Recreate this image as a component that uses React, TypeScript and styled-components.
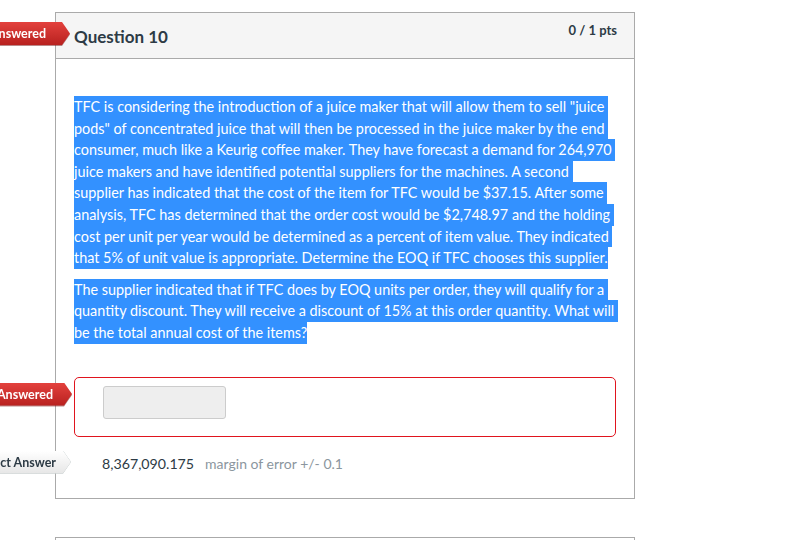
import React from 'react'
import styled, { createGlobalStyle } from 'styled-components'

const GlobalStyle = createGlobalStyle`
  body {
    margin: 0;
    background: #fff;
    font-family: Lato, 'Open Sans', sans-serif;
    color: #2d3b45;
  }
`

const Page = styled.div`
  padding: 12px 0 0 55px;
  width: 580px;
`

const QuestionBox = styled.div`
  position: relative;
  border: 1px solid #aaa;
  background: #fff;
  padding-bottom: 8px;
`

const NextBox = styled.div`
  margin-top: 38px;
  height: 20px;
  border-top: 1px solid #aaa;
  border-left: 1px solid #aaa;
  border-right: 1px solid #aaa;
`

const Header = styled.div`
  position: relative;
  display: flex;
  justify-content: space-between;
  align-items: flex-start;
  height: 45px;
  padding: 0 17px 0 18px;
  background: #f5f5f5;
  border-bottom: 1px solid #aaa;
`

const Title = styled.h2`
  margin: 13px 0 0;
  font-size: 17px;
  font-weight: 700;
  color: #2d3b45;
`

const Points = styled.span`
  margin-top: 9px;
  font-size: 13px;
  font-weight: 700;
  color: #2d3b45;
`

const Body = styled.div`
  padding: 37px 18px 0;
  font-size: 14.4px;
`

const Para = styled.div`
  margin-bottom: 10px;
`

const Line = styled.span`
  display: block;
  width: fit-content;
  line-height: 21.6px;
  background: #3391ff;
  color: #fff;
  white-space: pre;
`

const Row = styled.div<{ $h: number; $top: number }>`
  position: relative;
  height: ${(p) => p.$h}px;
  margin-top: ${(p) => p.$top}px;
  padding: 0 18px;
  display: flex;
  align-items: center;
`

const AnswerBox = styled.div`
  flex: 1;
  height: 60px;
  box-sizing: border-box;
  border: 1px solid #e0141e;
  border-radius: 5px;
  padding: 8px 28px;
`

const Input = styled.div`
  width: 121px;
  height: 31px;
  background: #eee;
  border: 1px solid #ccc;
  border-radius: 3px;
`

const CorrectValue = styled.span`
  margin-left: 28px;
  font-size: 14.2px;
  color: #2d3b45;
`

const Margin = styled.span`
  margin-left: 11px;
  font-size: 14px;
  color: #8b969e;
`

const BadgeWrap = styled.div<{ $top: number; $tip: number; $grey?: boolean }>`
  position: absolute;
  top: ${(p) => p.$top}px;
  right: calc(100% - ${(p) => p.$tip}px);
  filter: ${(p) =>
    p.$grey
      ? 'drop-shadow(0 0 0.6px #9aa)'
      : 'drop-shadow(0 1px 0.5px rgba(120,20,20,0.5))'};
`

const Badge = styled.div<{ $grey?: boolean; $pad: number }>`
  width: 130px;
  height: 23px;
  box-sizing: border-box;
  padding-right: ${(p) => p.$pad}px;
  text-align: right;
  font-size: 12.5px;
  font-weight: 700;
  line-height: 23px;
  color: ${(p) => (p.$grey ? '#2d3b45' : '#fff')};
  background: ${(p) =>
    p.$grey
      ? 'linear-gradient(#ffffff, #e6e6e6)'
      : 'linear-gradient(#e3413d, #b8211f)'};
  clip-path: polygon(0 0, 122px 0, 130px 50%, 122px 100%, 0 100%);
`

const para1 = [
  'TFC is considering the introduction of a juice maker that will allow them to sell "juice ',
  'pods" of concentrated juice that will then be processed in the juice maker by the end ',
  'consumer, much like a Keurig coffee maker. They have forecast a demand for 264,970 ',
  'juice makers and have identified potential suppliers for the machines. A second ',
  'supplier has indicated that the cost of the item for TFC would be $37.15. After some ',
  'analysis, TFC has determined that the order cost would be $2,748.97 and the holding ',
  'cost per unit per year would be determined as a percent of item value. They indicated ',
  'that 5% of unit value is appropriate. Determine the EOQ if TFC chooses this supplier.'
]

const para2 = [
  'The supplier indicated that if TFC does by EOQ units per order, they will qualify for a ',
  'quantity discount. They will receive a discount of 15% at this order quantity. What will ',
  'be the total annual cost of the items?'
]

export default function App() {
  return (
    <>
      <GlobalStyle />
      <Page>
        <QuestionBox>
          <Header>
            <BadgeWrap $top={9} $tip={14}>
              <Badge $pad={24}>Answered</Badge>
            </BadgeWrap>
            <Title>Question 10</Title>
            <Points>0 / 1 pts</Points>
          </Header>
          <Body>
            <Para>
              {para1.map((l) => (
                <Line key={l}>{l}</Line>
              ))}
            </Para>
            <Para>
              {para2.map((l) => (
                <Line key={l}>{l}</Line>
              ))}
            </Para>
          </Body>
          <Row $h={60} $top={33}>
            <BadgeWrap $top={6} $tip={16}>
              <Badge $pad={19}>Answered</Badge>
            </BadgeWrap>
            <AnswerBox>
              <Input />
            </AnswerBox>
          </Row>
          <Row $h={53} $top={0}>
            <BadgeWrap $top={14} $tip={15} $grey>
              <Badge $grey $pad={15}>
                Correct Answer
              </Badge>
            </BadgeWrap>
            <CorrectValue>8,367,090.175</CorrectValue>
            <Margin>margin of error +/- 0.1</Margin>
          </Row>
        </QuestionBox>
        <NextBox />
      </Page>
    </>
  )
}
